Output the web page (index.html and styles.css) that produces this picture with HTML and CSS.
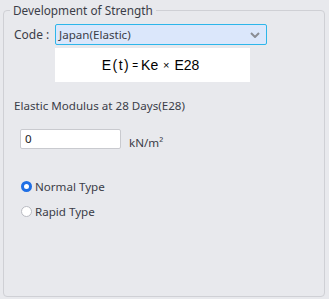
FILE: index.html
```html
<!DOCTYPE html>
<html>
<head>
<meta charset="utf-8">
<link rel="stylesheet" href="styles.css">
</head>
<body>
<fieldset class="group">
  <legend class="group-title">Development of Strength</legend>
  <div class="code-row">
    <span class="label">Code :</span>
    <div class="select">
      <span>Japan(Elastic)</span>
      <svg class="chev" width="10" height="6" viewBox="0 0 10 6"><path d="M1 1 L5 5 L9 1" fill="none" stroke="#8a8d94" stroke-width="2"/></svg>
    </div>
  </div>
  <div class="formula">E<span class="par">(</span>t<span class="par">)</span><span class="eq">=</span>Ke <span class="times">×</span> E28</div>
  <div class="section-label">Elastic Modulus at 28 Days(E28)</div>
  <div class="input-row">
    <div class="input">0</div>
    <span class="unit">kN/m²</span>
  </div>
  <div class="radios">
    <label class="radio"><span class="dot on"></span>Normal Type</label>
    <label class="radio"><span class="dot"></span>Rapid Type</label>
  </div>
</fieldset>
</body>
</html>
```
FILE: styles.css
```css
html, body { margin: 0; padding: 0; }
body {
  width: 329px;
  height: 299px;
  background: #e8e9ed;
  font-family: "Noto Sans", "Liberation Sans", sans-serif;
  font-size: 11.6px;
  color: #3b3d48;
  overflow: hidden;
}
.group {
  margin: 2px 4px 0 3px;
  padding: 0 0 0 10px;
  height: 295px;
  border: 1px solid #cfd0d5;
  border-radius: 4px;
  box-sizing: border-box;
  min-width: 0;
}
.group-title {
  padding: 0 3px;
  margin-left: -4px;
  font-size: 11.8px;
  line-height: 16px;
  color: #3b3d48;
}
.code-row {
  display: flex;
  align-items: center;
  margin-top: 6px;
}
.label {
  width: 41px;
  font-size: 12px;
  line-height: 20px;
}
.select {
  width: 212px;
  height: 21px;
  box-sizing: border-box;
  border: 1px solid #2db6ea;
  border-radius: 2px;
  background: #dbe7fb;
  display: flex;
  align-items: center;
  justify-content: space-between;
  padding: 0 6px 0 3px;
  font-size: 11.6px;
}
.chev { margin-top: 1px; }
.formula {
  margin: 3px 0 0 41px;
  width: 195px;
  height: 34px;
  background: #fff;
  font-family: "Liberation Sans", Arial, sans-serif;
  font-size: 14px;
  color: #000;
  display: flex;
  align-items: center;
  justify-content: center;
  padding-right: 4px;
  box-sizing: border-box;
  white-space: pre;
}
.par { font-size: 14px; margin: 0 1.5px; }
.eq { font-size: 10px; margin: 0 3px 0 2px; }
.times { font-size: 11px; margin: 0 1px; }
.section-label {
  margin-top: 16px;
  line-height: 16px;
}
.input-row {
  display: flex;
  align-items: flex-end;
  margin: 15px 0 0 6px;
}
.input {
  width: 101px;
  height: 20px;
  box-sizing: border-box;
  background: #fff;
  border: 1px solid #c9cacf;
  border-radius: 2px;
  padding: 1px 0 0 4px;
  line-height: 16px;
  color: #222;
}
.unit {
  margin-left: 8px;
  line-height: 16px;
  margin-bottom: -2px;
}
.radios {
  display: flex;
  flex-direction: column;
  gap: 9px;
  margin: 29px 0 0 7px;
}
.radio {
  display: flex;
  align-items: center;
  height: 16px;
}
.dot {
  width: 11px;
  height: 11px;
  box-sizing: border-box;
  border-radius: 50%;
  border: 1px solid #b9bbc2;
  background: #fff;
  margin-right: 3px;
}
.dot.on {
  border: 3px solid #1f6fe5;
}
```
